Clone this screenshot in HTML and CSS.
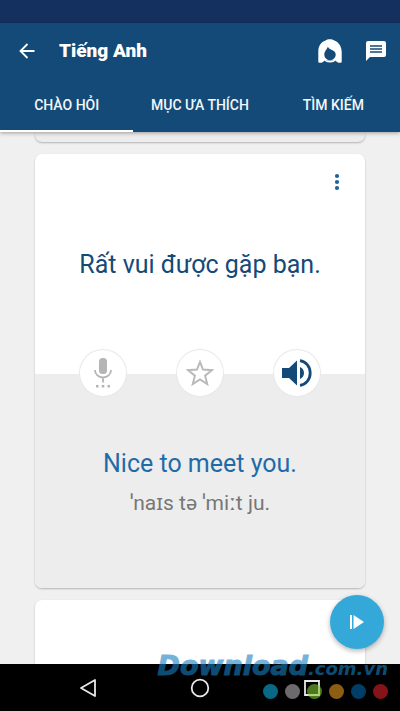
FILE: index.html
```html
<!DOCTYPE html>
<html lang="vi">
<head>
<meta charset="utf-8">
<meta name="viewport" content="width=device-width, initial-scale=1">
<title>Tiếng Anh</title>
<link rel="stylesheet" href="styles.css">
</head>
<body>
<div class="status-bar"></div>
<header class="app-header">
  <div class="toolbar">
    <button class="icon-button" type="button" aria-label="Quay lại">
      <svg width="16" height="16" viewBox="0 0 16 16" fill="none" stroke="#fff" stroke-width="1.8"><path d="M15.5 8H1.5M8.500 1L1.500 8l7 7"/></svg>
    </button>
    <h1 class="title">Tiếng Anh</h1>
    <button class="icon-button" type="button" aria-label="Giọng nói">
      <svg width="24" height="24" viewBox="0 0 24 24"><path fill="#fff" d="M.3 23.200V12.500C.3 7 3 2.800 7.500 1.400 9.500-.2 14-.2 16.300 1.400 21.200 3.200 23.700 8 23.700 13v10.200c-1.500.8-3 .8-4.200 0l-2.500-1.700h-10l-2.500 1.700c-1.200.8-2.700.8-4.200 0z"/><path fill="#134a78" d="M9.800 7.600c.8 1.900 2.300 2.700 4 3.300 2.500.9 3.900 2.400 3.900 4.700 0 3.200-2.500 5.700-5.700 5.700s-5.700-2.500-5.700-5.700c0-3.700 2.900-4.700 3.500-8z"/><path fill="#fff" d="M6.500 20.500c3 1.800 8 1.800 11 0l-1 2c-2.600 1.300-6.400 1.300-9 0z"/></svg>
    </button>
    <button class="icon-button" type="button" aria-label="Phản hồi">
      <svg width="20" height="20" viewBox="0 0 20 20"><path fill="#fff" d="M2 0h16a2 2 0 0 1 2 2v12a2 2 0 0 1-2 2H4l-4 4V2a2 2 0 0 1 2-2z"/><path stroke="#134a78" stroke-width="1.500" d="M4 5h12M4 8h12M4 11h12"/></svg>
    </button>
  </div>
  <nav class="tabs">
    <a class="tab tab-active" href="#greetings">CHÀO HỎI</a>
    <a class="tab" href="#favorites">MỤC ƯA THÍCH</a>
    <a class="tab" href="#search">TÌM KIẾM</a>
  </nav>
</header>
<main class="content" id="greetings">
  <div class="card card-previous"></div>
  <article class="card">
    <div class="phrase-panel">
      <button class="more-button" type="button" aria-label="Thêm">
        <svg width="6" height="18" viewBox="0 0 6 18" fill="#1c639b"><circle cx="3" cy="3" r="2.100"/><circle cx="3" cy="9" r="2.100"/><circle cx="3" cy="15" r="2.100"/></svg>
      </button>
      <p class="phrase">Rất vui được gặp bạn.</p>
    </div>
    <div class="controls">
      <button class="round-button" type="button" aria-label="Ghi âm">
        <svg width="18" height="32" viewBox="0 0 18 32"><rect x="5" y="1" width="8" height="16" rx="3.500" fill="#b5b5b5"/><path fill="none" stroke="#b5b5b5" stroke-width="1.800" d="M1 13c0 4.500 3.500 7.500 8 7.500s8-3 8-7.500M9 20.500v5"/><path fill="#b5b5b5" d="M2 28h2.500v2.500H2zM7.800 28h2.500v2.500H7.800zM13.500 28H16v2.500h-2.500z"/></svg>
      </button>
      <button class="round-button" type="button" aria-label="Yêu thích">
        <svg width="28" height="28" viewBox="0 0 28 28" fill="none" stroke="#bababa" stroke-width="2"><path d="M14 3l3 7.500 8.800.7-6.700 5.500 2.100 8.300L14 20.500 6.800 25l2.100-8.300-6.700-5.500 8.800-.7z"/></svg>
      </button>
      <button class="round-button" type="button" aria-label="Phát âm">
        <svg width="30" height="30" viewBox="0 0 30 30" fill="#134a78"><path d="M0 10h7L15 2.500v25L7 20H0zM18 9c2.400.8 4 3.200 4 6s-1.600 5.200-4 6z"/><path fill="none" stroke="#134a78" stroke-width="2.800" d="M18 2.600c5.700.8 10.200 5.800 10.200 12.400S23.700 26.600 18 27.400"/></svg>
      </button>
    </div>
    <div class="translation-panel">
      <p class="translation" lang="en">Nice to meet you.</p>
      <p class="phonetic">ˈnaɪs tə ˈmiːt ju.</p>
    </div>
  </article>
  <div class="card card-next"></div>
  <button class="play-button" type="button" aria-label="Phát tất cả">
    <svg width="14" height="14" viewBox="0 0 14 14" fill="#fff"><path d="M0 0h2v14H0zM3.500 0L14 7 3.500 14z"/></svg>
  </button>
</main>
<footer class="system-nav">
  <button class="nav-button" type="button" aria-label="Trở lại">
    <svg width="20" height="20" viewBox="0 0 20 20" fill="none" stroke="#e8e8e8" stroke-width="1.800" stroke-linejoin="round"><path d="M17 2v16L3 10z"/></svg>
  </button>
  <button class="nav-button" type="button" aria-label="Trang chủ">
    <svg width="20" height="20" viewBox="0 0 20 20" fill="none" stroke="#e8e8e8" stroke-width="1.800"><circle cx="10" cy="10" r="8.300"/></svg>
  </button>
  <button class="nav-button" type="button" aria-label="Gần đây">
    <svg width="20" height="20" viewBox="0 0 20 20" fill="none" stroke="#e8e8e8" stroke-width="1.800"><path d="M3 3h14v14H3z"/></svg>
  </button>
</footer>
<div class="watermark">
  <div class="brand">Download<span class="brand-domain">.com.vn</span></div>
  <div class="dots"><i class="dot dot-teal"></i><i class="dot dot-gray"></i><i class="dot dot-green"></i><i class="dot dot-orange"></i><i class="dot dot-blue"></i><i class="dot dot-red"></i></div>
</div>
</body>
</html>
```
FILE: styles.css
```css
* {
  box-sizing: border-box;
}

body {
  margin: 0;
  height: 100vh;
  display: flex;
  flex-direction: column;
  position: relative;
  overflow: hidden;
  background: #f0f0f0;
  font-family: Roboto, "Noto Sans", sans-serif;
}

button {
  display: flex;
  align-items: center;
  justify-content: center;
  padding: 0;
  border: 0;
  background: none;
}

h1,
p {
  margin: 0;
}

svg {
  display: block;
}

.status-bar {
  flex: none;
  height: 23px;
  background: #14305f;
}

.app-header {
  flex: none;
  position: relative;
  z-index: 1;
  background: #134a78;
  color: #fff;
  box-shadow: 0 1px 4px rgba(0, 0, 0, 0.35);
}

.toolbar {
  display: flex;
  align-items: center;
  height: 56px;
  padding: 0 14px 0 19px;
  gap: 24px;
}

.title {
  flex: 1;
  font-size: 19px;
  line-height: 24px;
  font-weight: 900;
}

.tabs {
  display: grid;
  grid-template-columns: repeat(3, 1fr);
}

.tab {
  height: 53px;
  border-bottom: 2px solid transparent;
  color: #f2f7fb;
  font-size: 14px;
  line-height: 53px;
  font-weight: 500;
  text-align: center;
  text-decoration: none;
}

.tab-active {
  border-color: #fff;
}

.content {
  flex: 1;
  min-height: 0;
  position: relative;
  z-index: 0;
  display: flex;
  flex-direction: column;
  gap: 12px;
  padding: 0 35px;
  overflow: hidden;
}

.card {
  flex: none;
  border-radius: 7px;
  background: #fff;
  box-shadow: 0 1px 2px rgba(0, 0, 0, 0.25);
}

.card-previous {
  height: 10px;
  border-radius: 0 0 7px 7px;
  background: #ededed;
}

.card-next {
  height: 220px;
}

.phrase-panel {
  display: flex;
  flex-direction: column;
  height: 220px;
  padding: 15px 16px;
}

.more-button {
  align-self: flex-end;
  width: 24px;
  height: 26px;
}

.phrase {
  margin-top: 54px;
  color: #134a78;
  font-size: 25px;
  line-height: 32px;
  text-align: center;
}

.controls {
  position: relative;
  display: flex;
  justify-content: space-between;
  margin: -24px 45px -22px;
}

.round-button {
  width: 46px;
  height: 46px;
  border-radius: 50%;
  background: #fff;
  box-shadow: 0 0 1px 1px #e8e8e8;
}

.translation-panel {
  height: 214px;
  padding-top: 74px;
  border-radius: 0 0 7px 7px;
  background: #ededed;
  text-align: center;
}

.translation {
  color: #1f6ba8;
  font-size: 25px;
  line-height: 32px;
}

.phonetic {
  margin-top: 11px;
  color: #777;
  font-size: 21px;
  line-height: 24px;
}

.play-button {
  position: absolute;
  right: 16px;
  bottom: 15px;
  width: 54px;
  height: 54px;
  border-radius: 50%;
  background: #35a8da;
  box-shadow: 0 2px 5px rgba(0, 0, 0, 0.3);
}

.system-nav {
  flex: none;
  display: flex;
  justify-content: center;
  gap: 92px;
  height: 47px;
  background: #000;
}

.nav-button {
  width: 20px;
}

.watermark {
  position: absolute;
  right: 12px;
  bottom: 12px;
  pointer-events: none;
}

.brand {
  color: #187fc1;
  font-family: "DejaVu Sans", sans-serif;
  font-size: 27px;
  line-height: 28px;
  font-weight: 700;
  font-style: italic;
  opacity: 0.6;
  -webkit-text-stroke: 1px #187fc1;
}

.brand-domain {
  font-size: 18px;
  -webkit-text-stroke-width: 0;
}

.dots {
  display: flex;
  justify-content: flex-end;
  gap: 7px;
  margin-top: 1px;
}

.dot {
  width: 15px;
  height: 15px;
  border-radius: 50%;
  opacity: 0.6;
}

.dot-teal { background: #0daee0; }
.dot-gray { background: #b5b1b5; }
.dot-green { background: #83c832; }
.dot-orange { background: #e89c20; }
.dot-blue { background: #0068ad; }
.dot-red { background: #e02028; }
```
